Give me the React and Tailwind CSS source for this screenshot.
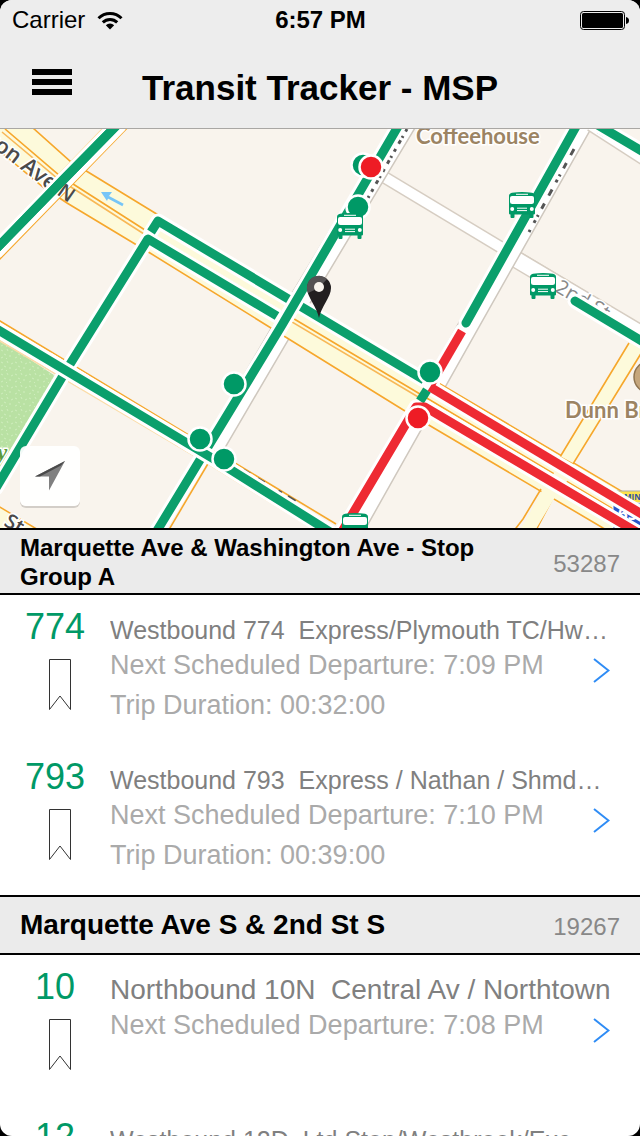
import React from "react";

const stops = [
  {
    name: "Marquette Ave & Washington Ave - Stop Group A",
    id: "53287",
    titleClass: "text-2xl leading-[29px] pt-[3px] pb-0.5",
    routes: [
      {
        number: "774",
        name: "Westbound 774\u00a0 Express/Plymouth TC/Hw…",
        titleClass: "text-[25px]",
        departure: "7:09 PM",
        duration: "00:32:00",
      },
      {
        number: "793",
        name: "Westbound 793\u00a0 Express / Nathan / Shmd…",
        titleClass: "text-[25px]",
        departure: "7:10 PM",
        duration: "00:39:00",
      },
    ],
  },
  {
    name: "Marquette Ave S & 2nd St S",
    id: "19267",
    titleClass: "text-[28px] leading-14",
    routes: [
      {
        number: "10",
        name: "Northbound 10N\u00a0 Central Av / Northtown",
        titleClass: "text-[28px]",
        departure: "7:08 PM",
      },
      {
        number: "12",
        name: "Westbound 12D\u00a0 Ltd Stop/Westbrook/Exc…",
        titleClass: "text-[25px]",
        departure: "7:12 PM",
      },
    ],
  },
];

const greenRoutes = [
  "M-5 250L63 180L118 124",
  "M151 232L158 221L424 380",
  "M-4 488L67 369L148 239L277 316",
  "M-5 328L212 458L330 532",
  "M400 123L369 176L282 325L155 534",
  "M578 123L466 323",
  "M596 124L645 153",
  "M575 301L645 343",
];

const redRoutes = ["M462 331L431 384", "M430 387L645 516", "M340 535L416 407L425 407L645 537"];

const greenStops = [
  [363, 165],
  [358, 207],
  [234, 384],
  [200, 439],
  [224, 459],
  [430, 372],
];

const redStops = [
  [371, 167],
  [418, 418],
];

const buses = [
  [509, 192],
  [530, 273],
  [337, 213],
  [342, 513],
];

const Bus = ({ x, y }) => (
  <g transform={`translate(${x} ${y})`}>
    <path
      d="M3 0.8Q13 -1 23 0.8Q26 1.5 26 4V21.5Q26 22.5 24.5 22.5V25Q24.5 26 23.5 26H21.5Q20.5 26 20.5 25V22.5H5.5V25Q5.5 26 4.5 26H2.5Q1.5 26 1.5 25V22.5Q0 22.5 0 21.5V4Q0 1.5 3 0.8Z"
      fill="#009966"
    />
    <rect x="7" y="1.8" width="12" height="1" fill="#fff" />
    <path d="M3 4H23Q25 4 25 6V9.5Q25 12 22.5 12H3.5Q1 12 1 9.5V6Q1 4 3 4Z" fill="#fff" />
    <circle cx="3.2" cy="17" r="2" fill="#fff" />
    <circle cx="22.8" cy="17" r="2" fill="#fff" />
    <path d="M8 16.2H18M8 18.6H18" stroke="#fff" strokeWidth="1" />
  </g>
);

const StreetMap = () => (
  <svg
    className="block w-full h-[399px]"
    viewBox="0 129 640 399"
    preserveAspectRatio="xMidYMid slice"
    fontFamily="'Open Sans', 'Noto Sans', sans-serif"
    fill="none"
    role="img"
    aria-label="Map of transit stops"
  >
    <defs>
      <pattern id="grass" width="14" height="12" patternUnits="userSpaceOnUse">
        <rect width="14" height="12" fill="#b9e1a3" />
        <path d="M1 2l2 1M7 1l1 2M11 4l2-1M4 6l2 1M9 8l2 0M1 10l2-1M6 10l1 1" stroke="#cfedbd" />
      </pattern>
    </defs>
    <rect y="128" width="640" height="400" fill="#f9f4ed" />

    {/* park */}
    <path d="M0 340L57 377L0 468Z" fill="url(#grass)" />
    <text x="-3" y="460" fontSize="23" fontStyle="italic" fontFamily="'Liberation Serif', serif" fontWeight="bold" fill="#5d9b3c" stroke="#fff" strokeWidth="3" paintOrder="stroke">
      y
    </text>

    {/* small streets */}
    <g>
      <path d="M374 171L645 334" stroke="#d6cdc2" strokeWidth="13" />
      <path d="M374 171L645 334" stroke="#fff" strokeWidth="10" />
      <path d="M512 257L645 336" stroke="#d6cdc2" strokeWidth="18" />
      <path d="M512 257L645 336" stroke="#fff" strokeWidth="15" />
      <path d="M406 123L285 325L206 460" stroke="#cfc8bf" strokeWidth="22" />
      <path d="M406 123L285 325L206 460" stroke="#fff" strokeWidth="19" />
      <path d="M583 123L470 323L353 531" stroke="#cfc8bf" strokeWidth="21" />
      <path d="M583 123L470 323L353 531" stroke="#fff" strokeWidth="18" />
      <path d="M592 123L645 157" stroke="#d6cdc2" strokeWidth="18" />
      <path d="M592 123L645 157" stroke="#fff" strokeWidth="15" />
    </g>

    {/* Washington Ave */}
    <g stroke="#f6a72c" strokeWidth="1.6">
      <path
        d="M-5 95L33 128L70 161L155 213L430 378L660 514L660 560L603 528L405 411L150 253L67 203L43 187L-5 147Z"
        fill="#fdfadb"
      />
      <path d="M5 129L59 175L145 230L430 400L660 537" />
      <path d="M2 132L57 178L144 234L430 404L660 541" stroke="#f8b857" />
      <path d="M629 343L560 457L573 464L645 347" fill="#fdfadb" />
      <path d="M541 489L523 519L513 532M553 498L535 532" />
      <path d="M545 485L526 520L518 532H534L557 494Z" fill="#fdfadb" stroke="none" />
      <path d="M554 473L567 481" stroke="#fdfadb" strokeWidth="7" />
      <path d="M-2 506L40 531H-2Z" fill="#fdfadb" />
    </g>

    {/* major streets */}
    <path d="M-5 241L106 125" stroke="#fbdca8" strokeWidth="1.5" />
    <path d="M-5 264L130 125" stroke="#f6a72c" strokeWidth="1.6" />
    <path d="M-5 252L120 124" stroke="#fff" strokeWidth="16" />
    <path d="M-5 318L336 524" stroke="#f6a72c" strokeWidth="1.6" />
    <path d="M-5 338L215 468L318 532" stroke="#fbdca8" strokeWidth="1.6" />
    <path d="M209 462L167 533" stroke="#f6a72c" strokeWidth="1.6" />

    {/* street name remnants peeking out from below the lines */}
    <g stroke="#555" strokeWidth="3">
      <path d="M407 129L368 198" strokeDasharray="3 5 2 3 4 6" />
      <path d="M574 149L529 232" strokeDasharray="7 9 6 7 2 4 3 8" />
      <path d="M243 470L310 510" strokeDasharray="8 9 8 16 4 7 9 30" />
    </g>
    <path d="M597 132L604 136" stroke="#777" strokeWidth="2" />

    <g fill="#4a4a4a" stroke="#fff" strokeWidth="3" paintOrder="stroke">
      <text transform="translate(-14 143) rotate(37)" fontSize="22" fontWeight="600">
        ton Ave
      </text>
      <text transform="translate(3 525) rotate(30)" fontSize="20" fontWeight="600">
        St
      </text>
      <text transform="translate(554 291) rotate(30)" fontSize="20" fill="#888">
        2nd St
      </text>
    </g>

    {/* highway shield */}
    <g>
      <rect x="611" y="491" width="34" height="12" fill="#fce24a" stroke="#aaa" />
      <text x="624" y="500" fontSize="8" fontWeight="bold" fill="#3155a8">
        MINN
      </text>
      <rect x="613" y="503" width="32" height="30" fill="#2a56c9" stroke="#fff" />
      <text x="618" y="520" fontSize="17" fontWeight="bold" fill="#fff">
        65
      </text>
    </g>

    {/* transit lines */}
    <g stroke="#fff" strokeWidth="15" strokeLinejoin="round" strokeLinecap="round">
      {greenRoutes.map((d) => (
        <path key={d} d={d} />
      ))}
      {redRoutes.map((d) => (
        <path key={d} d={d} />
      ))}
    </g>
    <g stroke="#0b9f6c" strokeWidth="9" strokeLinejoin="round">
      <path d="M427 390L420 401" />
      {greenRoutes.slice(0, 3).map((d) => (
        <path key={d} d={d} />
      ))}
      <path d={greenRoutes[5]} strokeLinecap="round" />
      <path d={greenRoutes[6]} />
      <path d={greenRoutes[7]} strokeLinecap="round" />
    </g>
    {/* the two lines that cross above the others */}
    <g strokeLinejoin="round">
      <path d="M303 289L266 352" stroke="#fff" strokeWidth="15" />
      <path d={greenRoutes[4]} stroke="#0b9f6c" strokeWidth="9" />
      <path d="M47 359L85 382M182 440L212 458" stroke="#fff" strokeWidth="15" />
      <path d={greenRoutes[3]} stroke="#0b9f6c" strokeWidth="9" />
    </g>
    <g stroke="#ee2a33" strokeWidth="9" strokeLinejoin="round">
      {redRoutes.map((d) => (
        <path key={d} d={d} />
      ))}
    </g>

    <text transform="translate(56 194) rotate(35)" fontSize="20" fontWeight="600" fill="#4a4a4a">
      N
    </text>
    <path d="M-5 250L63 180L118 124" stroke="#0b9f6c" strokeWidth="9" />
    <path d="M123 205L108 197" stroke="#76c5f7" strokeWidth="2.6" />
    <path d="M101 192L112 192L109 196L107 201Z" fill="#76c5f7" />

    {/* places */}
    <g fontFamily="Lato, sans-serif" fontSize="22" fontWeight="bold" fill="#9c8463" stroke="#fff" strokeWidth="3" paintOrder="stroke">
      <text x="416" y="144">
        Coffeehouse
      </text>
      <text x="565" y="418">
        Dunn Bros
      </text>
    </g>
    <circle cx="650" cy="377" r="16" fill="#c5a67c" stroke="#8f7450" strokeWidth="1.5" />

    {/* stops and buses */}
    <g stroke="#fff" strokeWidth="2.5">
      {greenStops.map(([x, y]) => (
        <circle key={`${x}-${y}`} cx={x} cy={y} r="11.5" fill="#009966" />
      ))}
      {redStops.map(([x, y]) => (
        <circle key={`${x}-${y}`} cx={x} cy={y} r="11.5" fill="#ee1c25" />
      ))}
    </g>
    {buses.map(([x, y]) => (
      <Bus key={`${x}-${y}`} x={x} y={y} />
    ))}

    {/* selected location */}
    <path d="M319 318C317 307 307 297 307 288A12 12 0 0 1 331 288C331 297 321 307 319 318Z" fill="#231f20" />
    <path d="M308 293A12 12 0 0 1 327 279L319 288Z" fill="#555253" />
    <circle cx="319" cy="287" r="5" fill="#f9f4ed" />
  </svg>
);

const StatusBar = () => (
  <div className="grid grid-cols-3 items-center h-10 pl-3 pr-[11px] text-2xl leading-10">
    <div className="flex items-center gap-3">
      <span>Carrier</span>
      <svg width="26" height="19" viewBox="0 0 26 19" fill="none" stroke="#000" strokeWidth="3">
        <path d="M1.5 7.2A16.3 16.3 0 0 1 24.5 7.2" />
        <path d="M5.8 11.4A10.2 10.2 0 0 1 20.2 11.4" />
        <path d="M13 18.5L8.8 14.3A6 6 0 0 1 17.2 14.3Z" fill="#000" stroke="none" />
      </svg>
    </div>
    <div className="text-center font-bold">6:57 PM</div>
    <svg className="justify-self-end" width="49" height="19" viewBox="0 0 49 19">
      <rect x="0.5" y="0.5" width="44" height="18" rx="3" fill="none" stroke="#000" />
      <rect x="2" y="2" width="41" height="15" rx="1.5" />
      <path d="M46 6Q49 6.5 49 9.5Q49 12.5 46 13Z" />
    </svg>
  </div>
);

const Header = () => (
  <header className="h-32 bg-[#ededed]">
    <StatusBar />
    <nav className="grid grid-cols-[1fr_auto_1fr] items-start pt-5 px-8">
      <button type="button" aria-label="Menu" className="flex items-center justify-self-start h-11 cursor-pointer">
        <svg width="40" height="26" viewBox="0 0 40 26">
          <path d="M0 0H40V6H0ZM0 10H40V16H0ZM0 20H40V26H0Z" />
        </svg>
      </button>
      <h1 className="text-[35px] leading-14 font-bold">Transit Tracker - MSP</h1>
    </nav>
  </header>
);

const RouteRow = ({ route }) => (
  <li className="flex h-[150px]">
    <div className="w-[110px] shrink-0 pt-3.5">
      <div className="text-4xl leading-9 text-center text-[#009966]">{route.number}</div>
      <button
        type="button"
        aria-label={`Bookmark route ${route.number}`}
        className="flex justify-center w-full mt-3.5 pl-2.5 cursor-pointer"
      >
        <svg width="22" height="52" viewBox="0 0 22 52" fill="none" stroke="#333">
          <path d="M0.5 0.5H21.5V50.5L11 37L0.5 50.5Z" />
        </svg>
      </button>
    </div>
    <div className="flex-1 min-w-0 pt-5 pr-6 text-[27px] leading-10 text-[#aaaaaa]">
      <h3 className={`truncate leading-[30px] text-[#808080] ${route.titleClass}`}>{route.name}</h3>
      <div className="flex pr-1.5">
        <div className="flex-1">
          <p>Next Scheduled Departure: {route.departure}</p>
          {route.duration && <p>Trip Duration: {route.duration}</p>}
        </div>
        <button type="button" aria-label={`Show route ${route.number}`} className="self-start pt-3 cursor-pointer">
          <svg width="17" height="26" viewBox="0 0 17 26" fill="none" stroke="#2f8cf5" strokeWidth="2">
            <path d="M1 2L15.5 13.5L1 25" />
          </svg>
        </button>
      </div>
    </div>
  </li>
);

const StopSection = ({ stop }) => (
  <section>
    <div className="flex items-center border-y-2 border-black bg-[#ebebeb] px-5">
      <h2 className={`flex-1 pr-10 font-bold ${stop.titleClass}`}>{stop.name}</h2>
      <span className="pt-1 text-2xl text-[#888888]">{stop.id}</span>
    </div>
    <ul>
      {stop.routes.map((route) => (
        <RouteRow key={route.number} route={route} />
      ))}
    </ul>
  </section>
);

const App = () => {
  return (
    <div className="h-screen bg-black font-['Liberation_Sans',Arial,sans-serif] text-black">
      <div className="h-full overflow-hidden rounded-xl bg-white">
        <Header />
        <div className="relative border-t border-[#a9a7a4]">
          <StreetMap />
          <button
            type="button"
            aria-label="Show my location"
            className="absolute left-5 bottom-[22px] size-15 flex items-center justify-center rounded-md bg-white/95 shadow-[0_2px_0_#d3cec8] cursor-pointer"
          >
            <svg width="30" height="30" viewBox="0 0 30 30">
              <path d="M30 0L0 15.5H14V29.5Z" fill="#808080" />
              <path d="M30 0L0 15.5H5L26 4.5Z" fill="#4a4a4a" />
            </svg>
          </button>
        </div>
        {stops.map((stop) => (
          <StopSection key={stop.id} stop={stop} />
        ))}
      </div>
    </div>
  );
};

export default App;
